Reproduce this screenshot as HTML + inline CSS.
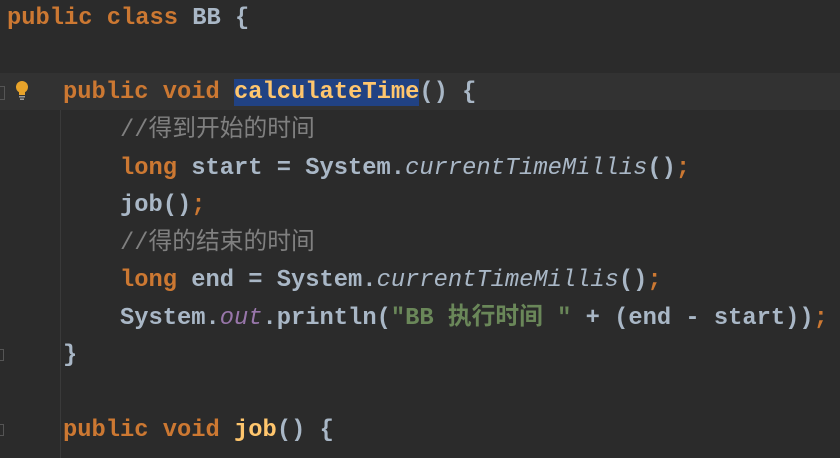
<!DOCTYPE html>
<html><head><style>
html,body{margin:0;padding:0;background:#2b2b2b;width:840px;height:458px;overflow:hidden}
.l{position:absolute;left:0;height:37.5px;line-height:37.5px;white-space:pre;font-family:"Liberation Mono","Noto Sans CJK SC",monospace;font-size:23.75px;color:#a9b7c6;font-weight:bold}
.k{color:#cc7832}.c{color:#808080;font-weight:normal}.s{color:#6a8759}.o{color:#9876aa;font-style:italic;font-weight:normal}.i{font-style:italic;font-weight:normal}
.sel{background:#214283}
</style></head><body>
<div style="position:absolute;left:0;top:73px;width:840px;height:37px;background:#323232"></div>
<div style="position:absolute;left:60px;top:110px;width:1px;height:348px;background:#3a3a3a"></div>
<svg style="position:absolute;left:13px;top:80px" width="18" height="22"><circle cx="9" cy="7" r="6" fill="#e8a32a"/><rect x="6" y="12" width="6" height="3" fill="#e8a32a"/><rect x="6" y="16" width="6" height="1.5" fill="#999"/><rect x="7" y="18.5" width="4" height="1.5" fill="#999"/></svg>
<div style="position:absolute;left:0;top:86px;width:4px;height:12px;border:1px solid #555;border-left:none"></div>
<div style="position:absolute;left:0;top:349px;width:3px;height:10px;border:1px solid #555;border-left:none"></div>
<div style="position:absolute;left:0;top:424px;width:3px;height:10px;border:1px solid #555;border-left:none"></div>
<div class="l" style="top:0px;left:7px"><span class="k">public class</span> BB {</div>
<div class="l" style="top:74px;left:63px"><span class="k">public void</span> <span class="sel" style="color:#ffc66d">calculateTime</span>() {</div>
<div class="l" style="top:112px;left:120px"><span class="c">//得到开始的时间</span></div>
<div class="l" style="top:150px;left:120px"><span class="k">long</span> start = System.<span class="i">currentTimeMillis</span>()<span class="k">;</span></div>
<div class="l" style="top:187px;left:120px">job()<span class="k">;</span></div>
<div class="l" style="top:225px;left:120px"><span class="c">//得的结束的时间</span></div>
<div class="l" style="top:262px;left:120px"><span class="k">long</span> end = System.<span class="i">currentTimeMillis</span>()<span class="k">;</span></div>
<div class="l" style="top:300px;left:120px">System.<span class="o">out</span>.println(<span class="s">"BB 执行时间 "</span> + (end - start))<span class="k">;</span></div>
<div class="l" style="top:337px;left:63px">}</div>
<div class="l" style="top:412px;left:63px"><span class="k">public void</span> <span style="color:#ffc66d">job</span>() {</div>
</body></html>
